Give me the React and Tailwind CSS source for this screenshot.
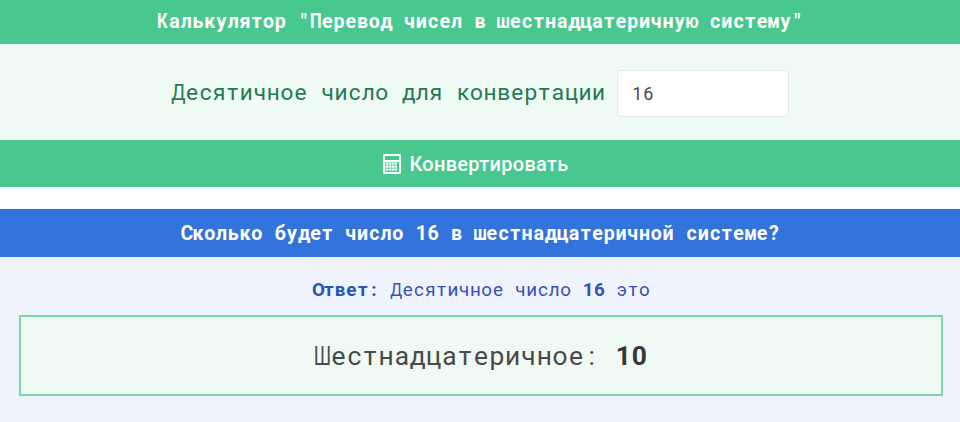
import React from "react";

// Roboto Mono isn't available, so each letter sits in a fixed 0.6em cell
const WIDE = "шщжмюыфДЦКЛПНИЙ";
const WIDER = "ШЩЖМЮЫФ";

const Mono = ({ text }) => (
  <>
    {Array.from(text).map((ch, i) => {
      if (WIDE.includes(ch) || WIDER.includes(ch)) {
        return (
          <span key={i} className="inline-flex justify-center w-[0.6em]">
            <span className={WIDER.includes(ch) ? "scale-x-[0.7]" : "scale-x-[0.84]"}>{ch}</span>
          </span>
        );
      }
      return (
        <span key={i} className="inline-block w-[0.6em] text-center whitespace-pre">
          {ch}
        </span>
      );
    })}
  </>
);

const CalcIcon = () => (
  <svg width="18" height="20" viewBox="0 0 18 20" fill="#fff">
    <path
      fillRule="evenodd"
      d="M1.5 0h15A1.5 1.5 0 0 1 18 1.500v17a1.500 1.500 0 0 1-1.500 1.500h-15A1.500 1.500 0 0 1 0 18.500v-17A1.500 1.500 0 0 1 1.500 0zM2 2v4h14V2zM2 8v10h14V8z"
    />
    {[8.500, 11.500, 14.500].map((y) =>
      [2.500, 5.500, 8.500, 11.500].map((x) => (
        <rect key={`${x}-${y}`} x={x} y={y} width="2.500" height="2.200" />
      ))
    )}
  </svg>
);

const App = () => {
  return (
    <div className="w-full h-[422px] overflow-hidden bg-white font-['Roboto',sans-serif]">
      <h1 className="h-11 bg-[#48c78e] flex items-center justify-center text-white font-bold text-[19.6px] whitespace-nowrap">
        <span>
          <Mono text={'Калькулятор "Перевод чисел в шестнадцатеричную систему"'} />
        </span>
      </h1>

      <div className="h-24 bg-[#effaf5] flex items-center justify-center gap-[12px] pt-[2px] pl-[1px]">
        <label className="text-[#257953] text-[22.6px] whitespace-nowrap">
          <Mono text="Десятичное число для конвертации" />
        </label>
        <input
          type="text"
          defaultValue="16"
          className="w-[172px] h-[47px] px-[14px] bg-white border border-[#e4e8e6] rounded-[4px] text-[#4a4a4a] text-[18px] tracking-[1px] outline-none"
        />
      </div>

      <button className="w-full h-[47px] pr-[8px] bg-[#48c78e] text-white text-[20px] tracking-[0.3px] font-medium flex items-center justify-center gap-[8px]">
        <CalcIcon />
        Конвертировать
      </button>

      <h2 className="mt-[22px] h-12 pt-[2px] bg-[#3273dc] flex items-center justify-center text-white font-bold text-[19.6px] whitespace-nowrap">
        <span>
          <Mono text="Сколько будет число 16 в шестнадцатеричной системе?" />
        </span>
      </h2>

      <div className="h-[165px] bg-[#eef3fc] pl-[19px] pr-[17px] pt-[21px]">
        <p className="text-center text-[#3850b7] text-[18.8px] leading-[24px] whitespace-nowrap">
          <b className="text-[#2a55b8]">
            <Mono text="Ответ:" />
          </b>
          <Mono text=" Десятичное число " />
          <b>
            <Mono text="16" />
          </b>
          <Mono text=" это" />
        </p>
        <div className="mt-[13px] h-[81px] pt-[2px] border-2 border-[#7ad6ab] bg-[#effaf5] flex items-center justify-center text-[#4a4a4a] text-[26.4px] whitespace-nowrap">
          <span>
            <Mono text="Шестнадцатеричное: " />
            <b className="text-[#363636]">
              <Mono text="10" />
            </b>
          </span>
        </div>
      </div>
    </div>
  );
};

export default App;
